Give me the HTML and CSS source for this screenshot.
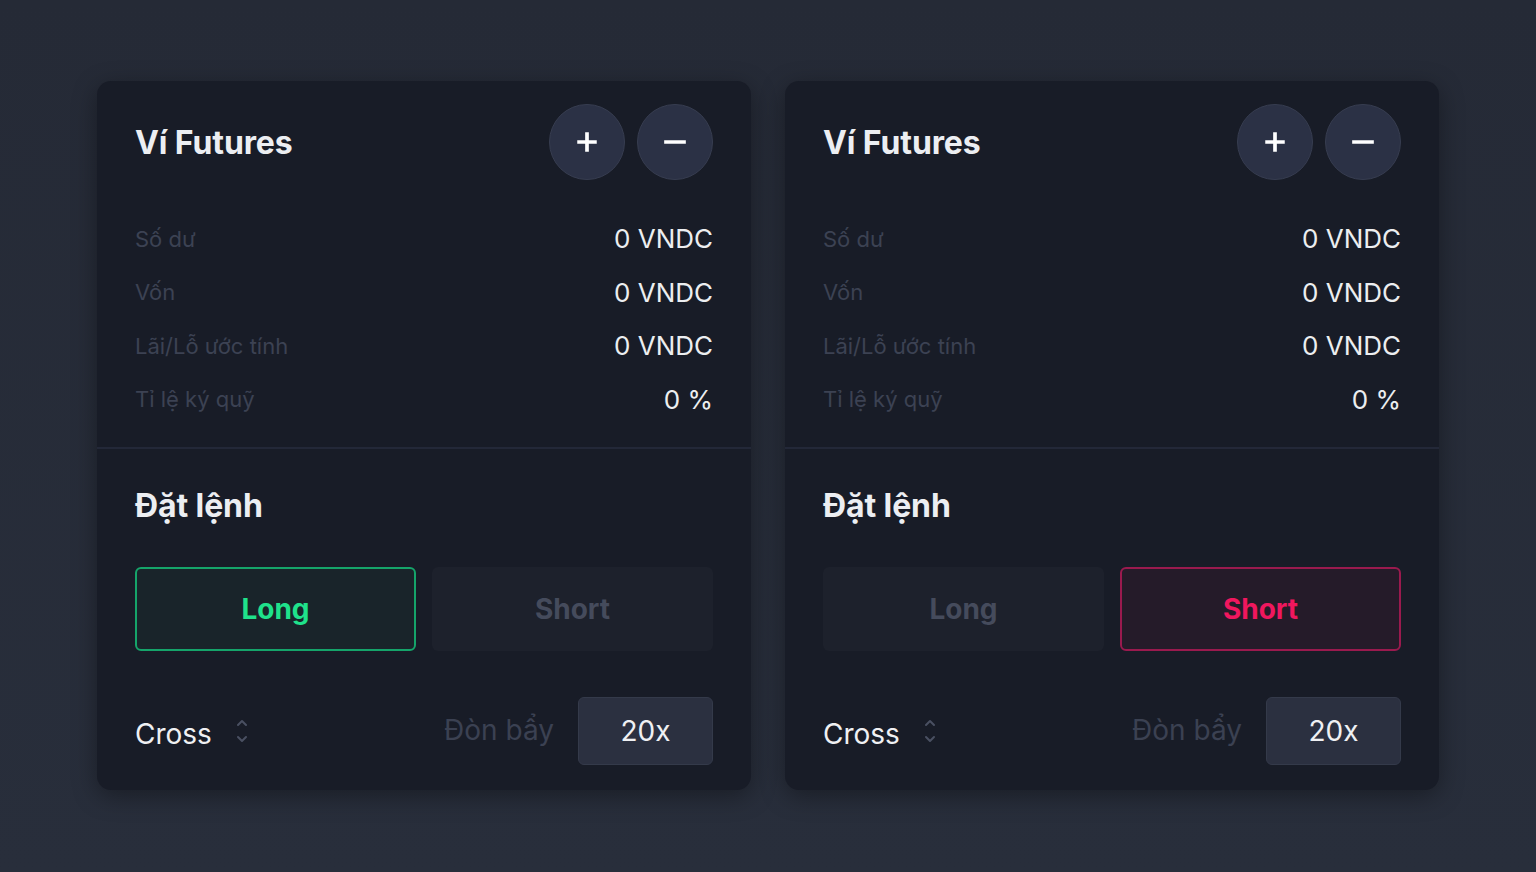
FILE: index.html
```html
<!DOCTYPE html>
<html lang="vi">
<head>
<meta charset="utf-8">
<title>Ví Futures</title>
<link rel="stylesheet" href="styles.css">
</head>
<body>
<main class="stage">
  <section class="card">
    <div class="wallet">
      <div class="head">
        <h2 class="title">Ví Futures</h2>
        <div class="actions">
          <button class="circle" aria-label="Nạp"><svg viewBox="0 0 24 24" width="26" height="26"><path d="M12 3v18M3 12h18" stroke="#fff" stroke-width="3.4" fill="none"/></svg></button>
          <button class="circle" aria-label="Rút"><svg viewBox="0 0 24 24" width="26" height="26"><path d="M2 12h20" stroke="#fff" stroke-width="3.4" fill="none"/></svg></button>
        </div>
      </div>
      <dl class="rows">
        <div class="row"><dt>Số dư</dt><dd>0 VNDC</dd></div>
        <div class="row"><dt>Vốn</dt><dd>0 VNDC</dd></div>
        <div class="row"><dt>Lãi/Lỗ ước tính</dt><dd>0 VNDC</dd></div>
        <div class="row"><dt>Tỉ lệ ký quỹ</dt><dd>0 %</dd></div>
      </dl>
    </div>
    <div class="order">
      <h2 class="title">Đặt lệnh</h2>
      <div class="sides">
        <button class="side long active">Long</button>
        <button class="side short">Short</button>
      </div>
      <div class="controls">
        <div class="mode">Cross <svg class="chev" viewBox="0 0 12 26" width="12" height="26"><path d="M2 7l4-4 4 4M2 19l4 4 4-4" stroke="#4a5062" stroke-width="2" fill="none" stroke-linecap="round" stroke-linejoin="round"/></svg></div>
        <div class="lev"><span class="lev-label">Đòn bẩy</span><span class="lev-box">20x</span></div>
      </div>
    </div>
  </section>
  <section class="card">
    <div class="wallet">
      <div class="head">
        <h2 class="title">Ví Futures</h2>
        <div class="actions">
          <button class="circle" aria-label="Nạp"><svg viewBox="0 0 24 24" width="26" height="26"><path d="M12 3v18M3 12h18" stroke="#fff" stroke-width="3.4" fill="none"/></svg></button>
          <button class="circle" aria-label="Rút"><svg viewBox="0 0 24 24" width="26" height="26"><path d="M2 12h20" stroke="#fff" stroke-width="3.4" fill="none"/></svg></button>
        </div>
      </div>
      <dl class="rows">
        <div class="row"><dt>Số dư</dt><dd>0 VNDC</dd></div>
        <div class="row"><dt>Vốn</dt><dd>0 VNDC</dd></div>
        <div class="row"><dt>Lãi/Lỗ ước tính</dt><dd>0 VNDC</dd></div>
        <div class="row"><dt>Tỉ lệ ký quỹ</dt><dd>0 %</dd></div>
      </dl>
    </div>
    <div class="order">
      <h2 class="title">Đặt lệnh</h2>
      <div class="sides">
        <button class="side long">Long</button>
        <button class="side short active">Short</button>
      </div>
      <div class="controls">
        <div class="mode">Cross <svg class="chev" viewBox="0 0 12 26" width="12" height="26"><path d="M2 7l4-4 4 4M2 19l4 4 4-4" stroke="#4a5062" stroke-width="2" fill="none" stroke-linecap="round" stroke-linejoin="round"/></svg></div>
        <div class="lev"><span class="lev-label">Đòn bẩy</span><span class="lev-box">20x</span></div>
      </div>
    </div>
  </section>
</main>
</body>
</html>
```

FILE: styles.css
```css
* { box-sizing: border-box; }
html, body { margin: 0; height: 100%; }
body {
  background: linear-gradient(180deg, #252a36 0%, #282e3b 100%);
  font-family: Inter, "Liberation Sans", Arial, sans-serif;
  color: #e9e9ec;
}
.stage {
  display: flex;
  gap: 34px;
  padding: 81px 97px 0 97px;
}
.card {
  width: 654px;
  height: 709px;
  background: #181c27;
  border-radius: 14px;
  box-shadow: 0 6px 24px rgba(0,0,0,0.35);
  overflow: hidden;
  display: flex;
  flex-direction: column;
}
.wallet {
  padding: 23px 38px 0 38px;
  height: 368px;
  border-bottom: 2px solid #232838;
}
.head {
  display: flex;
  justify-content: space-between;
  align-items: center;
}
.title {
  margin: 0;
  font-family: Inter, "Open Sans", sans-serif;
  font-weight: 700;
  font-size: 32px;
  letter-spacing: -0.1px;
  color: #eceef2;
}
.actions { display: flex; gap: 12px; }
.circle {
  width: 76px; height: 76px;
  border-radius: 50%;
  background: #2b3145;
  border: 1px solid #373d50;
  display: flex; align-items: center; justify-content: center;
  padding: 0;
}
.rows { margin: 32px 0 0 0; display: flex; flex-direction: column; }
.row {
  display: flex; justify-content: space-between; align-items: center;
  height: 53.5px;
}
.row dt { font-size: 22px; color: #3c4253; }
.row dd { margin: 0; font-size: 26px; color: #eceef0; }
.order {
  padding: 37px 38px 0 38px;
  flex: 1;
}
.sides {
  display: flex; gap: 16px;
  margin-top: 42px;
}
.side {
  flex: 1;
  height: 84px;
  border-radius: 6px;
  border: 2px solid transparent;
  background: #1d212c;
  color: #454b5c;
  font-family: Inter, "Open Sans", sans-serif;
  font-weight: 700;
  font-size: 28px;
}
.long.active { background: #19242a; border-color: #15a46a; color: #1fe28b; }
.short.active { background: #251b29; border-color: #9a1a4e; color: #f0175e; }
.controls {
  display: flex; justify-content: space-between; align-items: center;
  margin-top: 46px;
}
.mode { display: flex; align-items: center; gap: 24px; font-size: 28px; color: #eff0f3; margin-top: 5px; }
.chev { margin-top: -6px; }
.lev { display: flex; align-items: center; gap: 24px; }
.lev-label { font-size: 28px; color: #3b4152; margin-top: -2px; }
.lev-box {
  width: 135px; height: 68px;
  background: #2b3040;
  border: 1px solid #343a4a;
  border-radius: 6px;
  display: flex; align-items: center; justify-content: center;
  font-size: 28px; color: #eff0f3;
}
```
